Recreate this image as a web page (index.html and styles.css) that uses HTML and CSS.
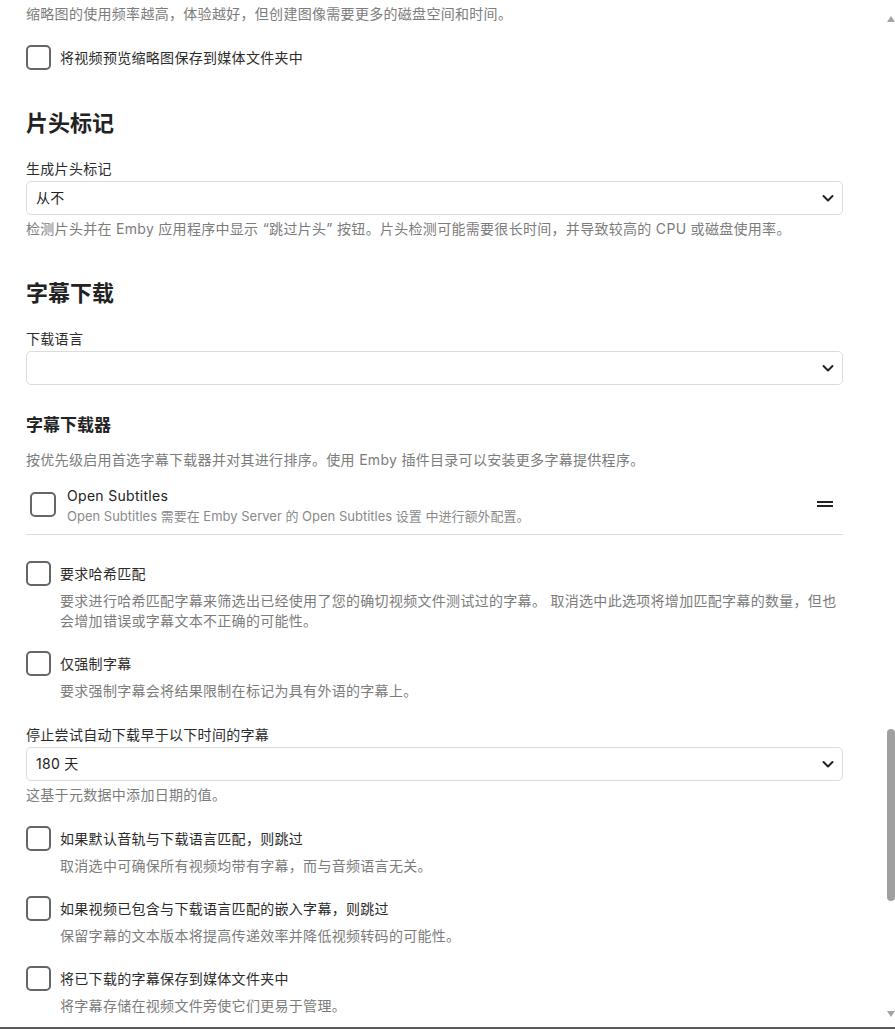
FILE: index.html
```html
<!DOCTYPE html>
<html lang="zh-CN">
<head>
<meta charset="utf-8">
<title>字幕下载设置</title>
<link rel="stylesheet" href="styles.css">
</head>
<body>
<div class="page">
  <main class="content">
    <p class="desc first">缩略图的使用频率越高，体验越好，但创建图像需要更多的磁盘空间和时间。</p>

    <div class="check-row top-check">
      <span class="box"></span>
      <span class="check-label">将视频预览缩略图保存到媒体文件夹中</span>
    </div>

    <h2 class="section-title intro-title">片头标记</h2>
    <div class="field intro-field">
      <div class="field-label">生成片头标记</div>
      <div class="select"><span class="select-value">从不</span><svg class="chev" width="14" height="14" viewBox="0 0 14 14"><path d="M2.5 5 L7 9.5 L11.5 5" fill="none" stroke="#222" stroke-width="2" stroke-linecap="round" stroke-linejoin="round"/></svg></div>
      <p class="desc after-select">检测片头并在 Emby 应用程序中显示 “跳过片头” 按钮。片头检测可能需要很长时间，并导致较高的 CPU 或磁盘使用率。</p>
    </div>

    <h2 class="section-title sub-title">字幕下载</h2>
    <div class="field lang-field">
      <div class="field-label">下载语言</div>
      <div class="select"><span class="select-value"></span><svg class="chev" width="14" height="14" viewBox="0 0 14 14"><path d="M2.5 5 L7 9.5 L11.5 5" fill="none" stroke="#222" stroke-width="2" stroke-linecap="round" stroke-linejoin="round"/></svg></div>
    </div>

    <h3 class="group-title">字幕下载器</h3>
    <p class="desc group-desc">按优先级启用首选字幕下载器并对其进行排序。使用 Emby 插件目录可以安装更多字幕提供程序。</p>

    <div class="provider-row">
      <span class="box"></span>
      <div class="provider-text">
        <div class="provider-name">Open Subtitles</div>
        <div class="provider-desc">Open Subtitles 需要在 Emby Server 的 Open Subtitles 设置 中进行额外配置。</div>
      </div>
      <svg class="handle" width="16" height="8" viewBox="0 0 16 8"><rect x="0" y="1" width="16" height="2" fill="#222"/><rect x="0" y="5" width="16" height="2" fill="#222"/></svg>
    </div>

    <div class="check-item hash-item">
      <div class="check-row">
        <span class="box"></span>
        <span class="check-label">要求哈希匹配</span>
      </div>
      <p class="desc item-desc">要求进行哈希匹配字幕来筛选出已经使用了您的确切视频文件测试过的字幕。 取消选中此选项将增加匹配字幕的数量，但也会增加错误或字幕文本不正确的可能性。</p>
    </div>

    <div class="check-item">
      <div class="check-row">
        <span class="box"></span>
        <span class="check-label">仅强制字幕</span>
      </div>
      <p class="desc item-desc">要求强制字幕会将结果限制在标记为具有外语的字幕上。</p>
    </div>

    <div class="field age-field">
      <div class="field-label">停止尝试自动下载早于以下时间的字幕</div>
      <div class="select"><span class="select-value">180 天</span><svg class="chev" width="14" height="14" viewBox="0 0 14 14"><path d="M2.5 5 L7 9.5 L11.5 5" fill="none" stroke="#222" stroke-width="2" stroke-linecap="round" stroke-linejoin="round"/></svg></div>
      <p class="desc after-select">这基于元数据中添加日期的值。</p>
    </div>

    <div class="check-item skip-item">
      <div class="check-row">
        <span class="box"></span>
        <span class="check-label">如果默认音轨与下载语言匹配，则跳过</span>
      </div>
      <p class="desc item-desc">取消选中可确保所有视频均带有字幕，而与音频语言无关。</p>
    </div>

    <div class="check-item">
      <div class="check-row">
        <span class="box"></span>
        <span class="check-label">如果视频已包含与下载语言匹配的嵌入字幕，则跳过</span>
      </div>
      <p class="desc item-desc">保留字幕的文本版本将提高传递效率并降低视频转码的可能性。</p>
    </div>

    <div class="check-item">
      <div class="check-row">
        <span class="box"></span>
        <span class="check-label">将已下载的字幕保存到媒体文件夹中</span>
      </div>
      <p class="desc item-desc">将字幕存储在视频文件旁使它们更易于管理。</p>
    </div>
  </main>

  <aside class="scrollbar">
    <span class="arrow up"></span>
    <span class="thumb"></span>
    <span class="arrow down"></span>
  </aside>
</div>
</body>
</html>
```

FILE: styles.css
```css
* {
  box-sizing: border-box;
}

html, body {
  margin: 0;
  padding: 0;
  background: #ffffff;
}

body {
  font-family: "Inter", "Noto Sans CJK SC", sans-serif;
  font-size: 14px;
  line-height: 20px;
  letter-spacing: 0.3px;
  color: #2b2b2b;
  height: 1029px;
  overflow: hidden;
}

.page {
  display: flex;
  height: 1029px;
  border-bottom: 2px solid #5a5a5a;
}

.content {
  flex: 1;
  padding: 4px 43px 0 26px;
}

.scrollbar {
  width: 9px;
  display: flex;
  flex-direction: column;
  align-items: flex-end;
}

.arrow {
  width: 0;
  height: 0;
  border-left: 4px solid transparent;
  border-right: 4px solid transparent;
}

.arrow.up {
  margin-top: 16px;
  border-bottom: 6px solid #a3a3a3;
}

.arrow.down {
  margin-top: auto;
  margin-bottom: 10px;
  border-top: 6px solid #a3a3a3;
}

.thumb {
  width: 8px;
  height: 172px;
  margin-top: 707px;
  background: #a0a0a0;
  border-radius: 4px;
}

p {
  margin: 0;
}

.desc {
  color: #7c7c7c;
}

.box {
  flex: none;
  width: 25px;
  height: 25px;
  border: 2px solid #666666;
  border-radius: 5px;
  background: #fff;
}

.check-row {
  display: flex;
  align-items: center;
  gap: 9px;
  height: 25px;
}

.check-label {
  color: #2b2b2b;
}

.top-check {
  margin-top: 21px;
}

.section-title {
  margin: 0;
  font-size: 22px;
  line-height: 30px;
  font-weight: 700;
  color: #222;
  letter-spacing: 0;
}

.intro-title {
  margin-top: 38px;
}

.sub-title {
  margin-top: 39px;
}

.field-label {
  color: #2b2b2b;
}

.intro-field,
.lang-field {
  margin-top: 21px;
}

.select {
  margin-top: 2px;
  height: 34px;
  border: 1px solid #dcdcdc;
  border-radius: 5px;
  display: flex;
  align-items: center;
  justify-content: space-between;
  padding: 0 7px 0 9px;
  color: #222;
}

.chev {
  flex: none;
}

.after-select {
  margin-top: 4px;
}

.group-title {
  margin: 28px 0 0;
  font-size: 17px;
  line-height: 24px;
  font-weight: 700;
  color: #222;
  letter-spacing: 0;
}

.group-desc {
  margin-top: 13px;
}

.provider-row {
  margin-top: 16px;
  display: flex;
  align-items: center;
  padding: 0 10px 8px 4px;
  border-bottom: 1px solid #dcdcdc;
}

.provider-row .box {
  width: 26px;
  margin-top: -3px;
}

.provider-text {
  flex: 1;
  margin-left: 11px;
}

.provider-name {
  color: #222;
}

.provider-desc {
  color: #8a8a8a;
  font-size: 13px;
  letter-spacing: 0;
}

.handle {
  flex: none;
  margin-top: -4px;
}

.check-item {
  margin-top: 20px;
}

.hash-item {
  margin-top: 26px;
}

.item-desc {
  margin-top: 5px;
  padding-left: 34px;
}

.age-field {
  margin-top: 24px;
}

.skip-item {
  margin-top: 21px;
}
```
